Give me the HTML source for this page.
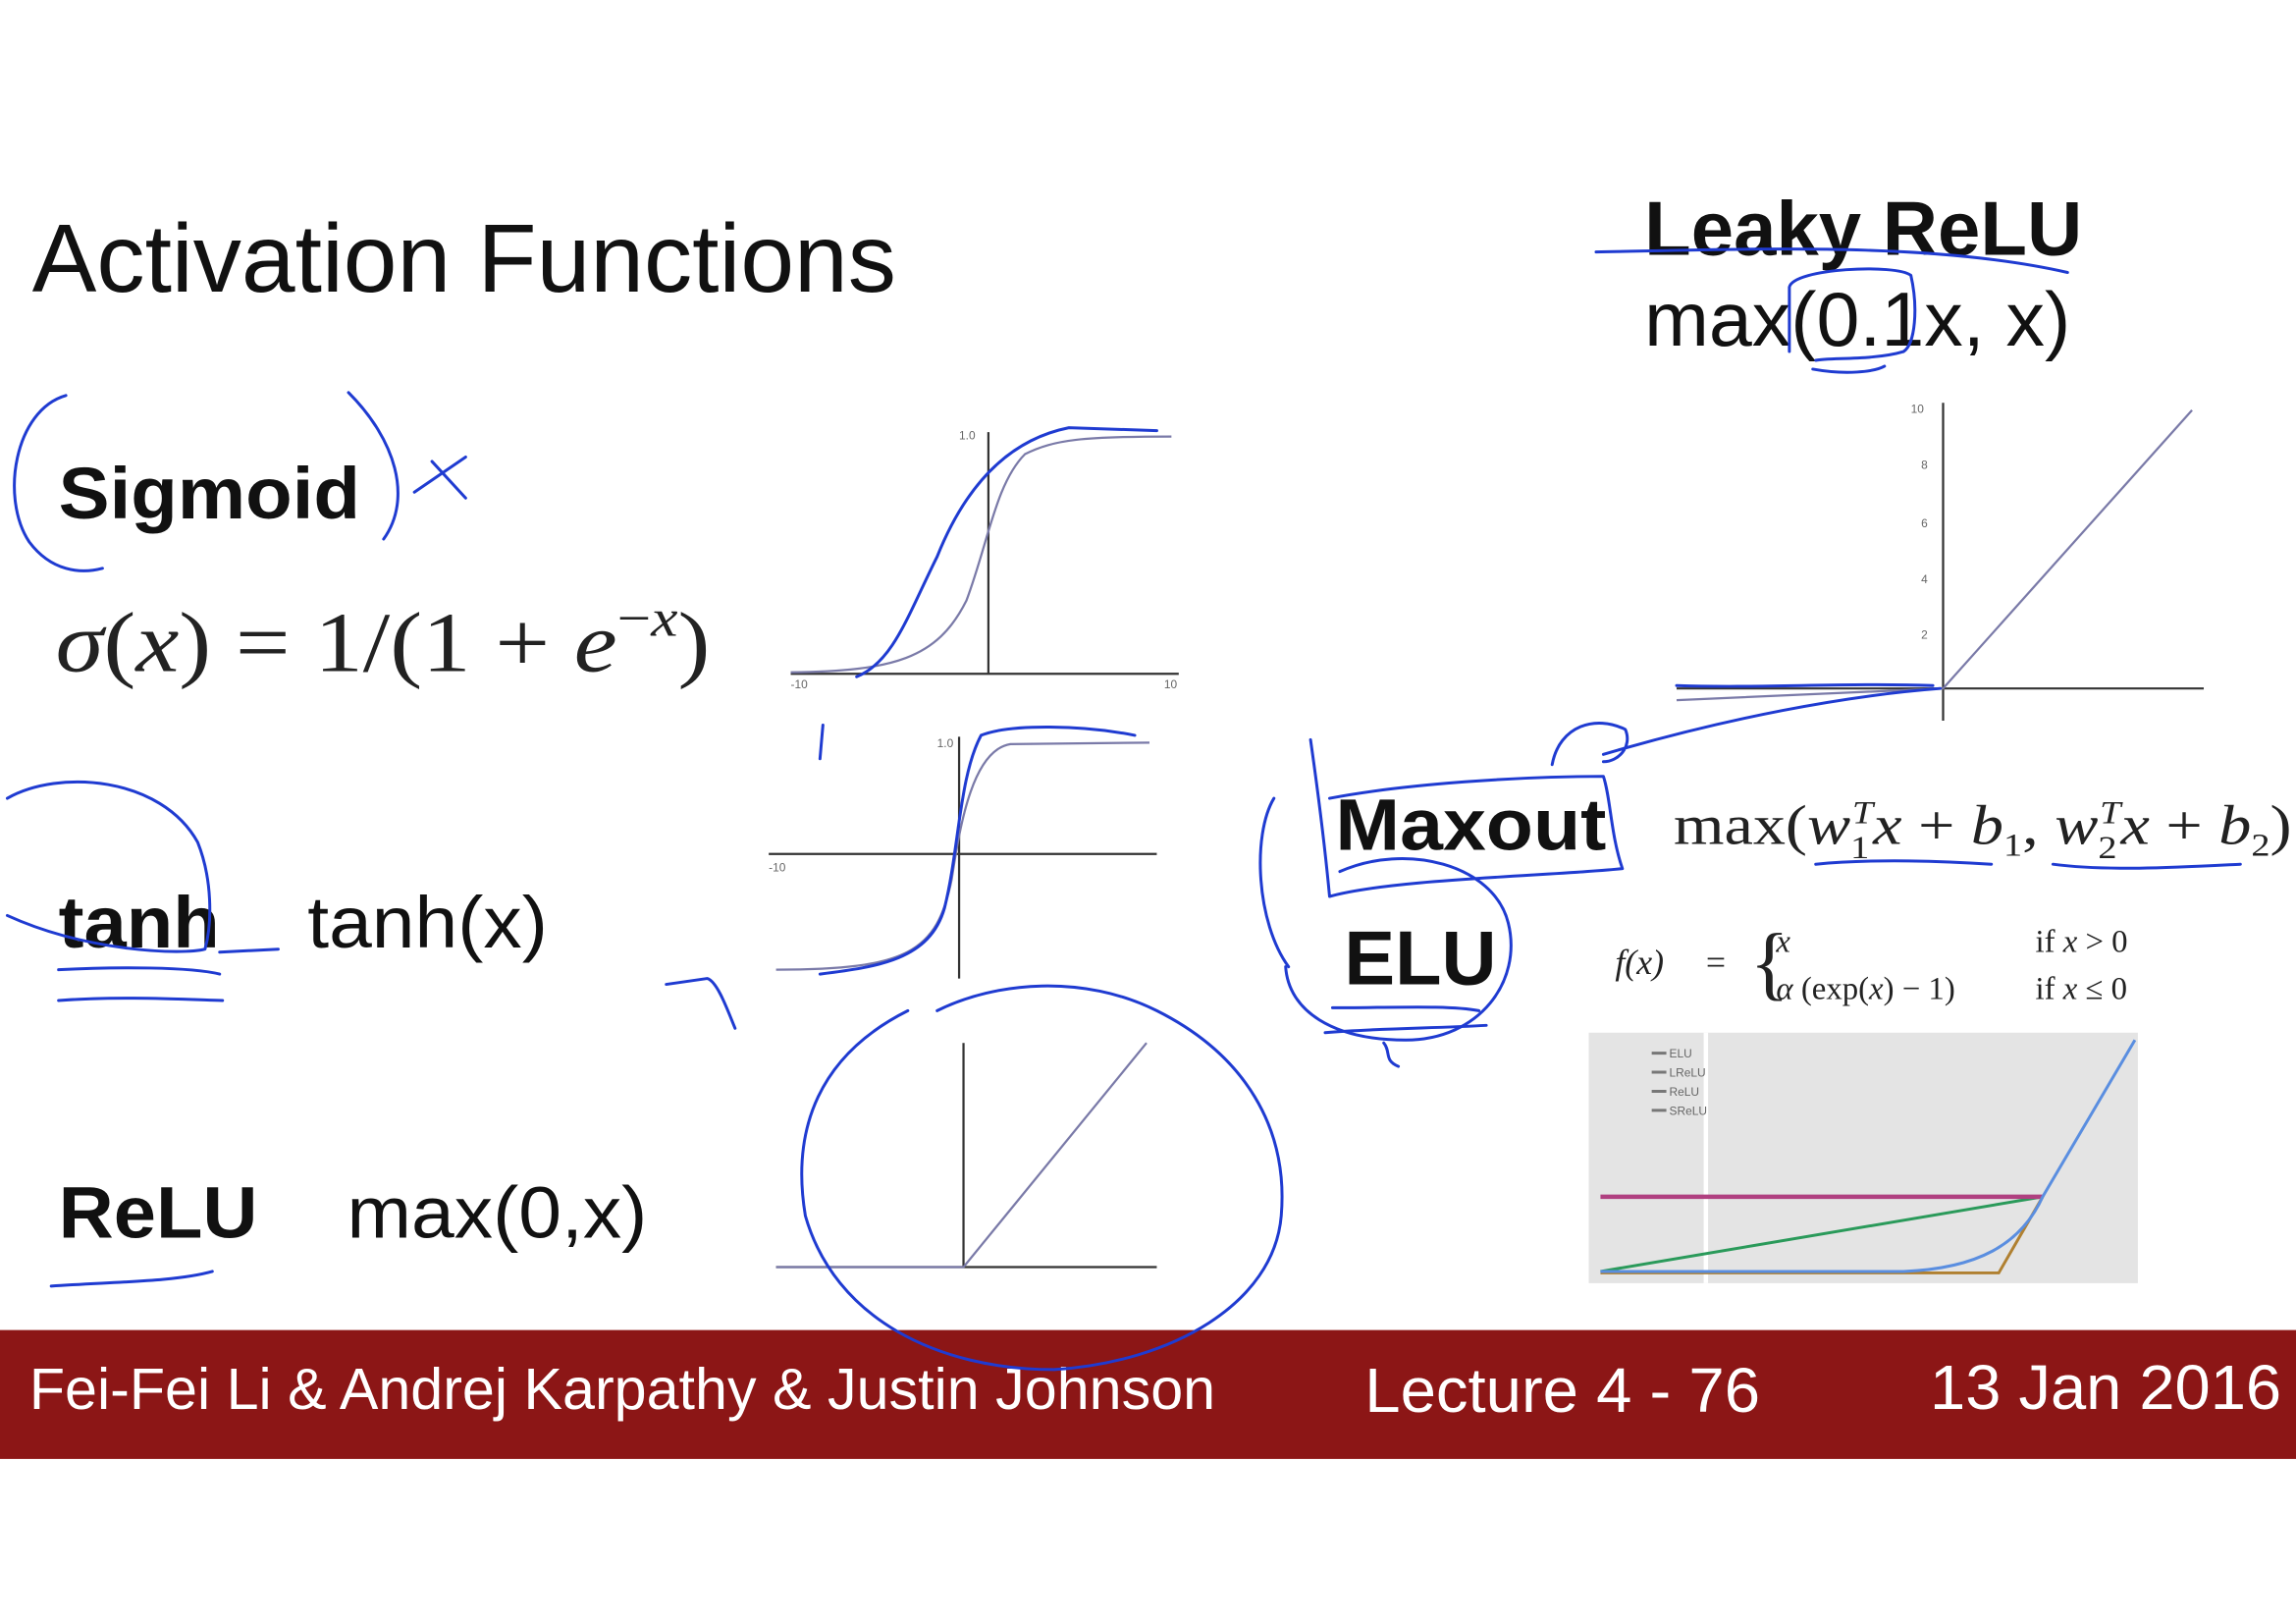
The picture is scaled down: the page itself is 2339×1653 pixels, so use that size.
<!DOCTYPE html>
<html><head><meta charset="utf-8"><style>
html,body{margin:0;padding:0;background:#fff;width:2339px;height:1653px;overflow:hidden}
svg{display:block}
.s{font-family:"Liberation Sans",sans-serif;fill:#111}
.b{font-weight:bold}
.m{font-family:"Liberation Serif",serif;fill:#222}
.ink{fill:none;stroke:#1f3bd1;stroke-width:2;stroke-linecap:round;stroke-linejoin:round}
.ax{stroke:#333;stroke-width:1.5;fill:none}
.tk{font-family:"Liberation Sans",sans-serif;font-size:8px;fill:#666}
</style></head><body>
<svg width="2339" height="1653" viewBox="0 0 1568 1108" preserveAspectRatio="none">
<rect width="1568" height="1108" fill="#fff"/>
<text class="s" x="22" y="199" font-size="66" textLength="590" lengthAdjust="spacingAndGlyphs">Activation Functions</text>
<text class="s b" x="1123" y="174" font-size="52" textLength="299" lengthAdjust="spacingAndGlyphs">Leaky ReLU</text>
<text class="s" x="1123" y="236" font-size="52" textLength="291" lengthAdjust="spacingAndGlyphs">max(0.1x, x)</text>
<text class="s b" x="40" y="354" font-size="50" textLength="206" lengthAdjust="spacingAndGlyphs">Sigmoid</text>
<text class="m" x="38" y="458" font-size="58" textLength="447" lengthAdjust="spacingAndGlyphs"><tspan font-style="italic">σ</tspan>(<tspan font-style="italic">x</tspan>) = 1/(1 + <tspan font-style="italic">e</tspan><tspan font-size="36" dy="-24">−<tspan font-style="italic">x</tspan></tspan><tspan dy="24">)</tspan></text>
<text class="s b" x="40" y="647" font-size="50" textLength="110" lengthAdjust="spacingAndGlyphs">tanh</text>
<text class="s" x="210" y="647" font-size="50" textLength="164" lengthAdjust="spacingAndGlyphs">tanh(x)</text>
<text class="s b" x="40" y="845" font-size="50" textLength="136" lengthAdjust="spacingAndGlyphs">ReLU</text>
<text class="s" x="237" y="845" font-size="50" textLength="205" lengthAdjust="spacingAndGlyphs">max(0,x)</text>
<text class="s b" x="912" y="580" font-size="50" textLength="185" lengthAdjust="spacingAndGlyphs">Maxout</text>
<text class="m" x="1143" y="576" font-size="38" textLength="422" lengthAdjust="spacingAndGlyphs">max(<tspan font-style="italic">w</tspan><tspan font-size="22" dy="10">1</tspan><tspan font-size="22" dy="-24" dx="-10" font-style="italic">T</tspan><tspan dy="14" font-style="italic">x</tspan> + <tspan font-style="italic">b</tspan><tspan font-size="22" dy="8">1</tspan><tspan dy="-8">, </tspan><tspan font-style="italic">w</tspan><tspan font-size="22" dy="10">2</tspan><tspan font-size="22" dy="-24" dx="-10" font-style="italic">T</tspan><tspan dy="14" font-style="italic">x</tspan> + <tspan font-style="italic">b</tspan><tspan font-size="22" dy="8">2</tspan><tspan dy="-8">)</tspan></text>
<text class="s b" x="918" y="672" font-size="52" textLength="104" lengthAdjust="spacingAndGlyphs">ELU</text>
<text class="m" x="1103" y="665" font-size="24" font-style="italic">f(x)</text>
<text class="m" x="1165" y="665" font-size="24">=</text>
<text class="m" x="1195" y="676" font-size="56" fill="#444">{</text>
<text class="m" x="1213" y="650" font-size="22" font-style="italic">x</text>
<text class="m" x="1213" y="682" font-size="22"><tspan font-style="italic">α</tspan> (exp(<tspan font-style="italic">x</tspan>) − 1)</text>
<text class="m" x="1390" y="650" font-size="22">if <tspan font-style="italic">x</tspan> &gt; 0</text>
<text class="m" x="1390" y="682" font-size="22">if <tspan font-style="italic">x</tspan> ≤ 0</text>

<path class="ax" d="M540 460H805M675 295V460"/>
<path d="M540 459 C610 458 640 450 660 410 C675 370 680 330 700 310 C720 300 740 298 800 298" fill="none" stroke="#7a7aa8" stroke-width="1.5"/>
<text class="tk" x="655" y="300">1.0</text><text class="tk" x="540" y="470">-10</text><text class="tk" x="795" y="470">10</text>
<path class="ax" d="M525 583H790M655 503V668"/>
<path d="M530 662 C620 662 640 650 650 600 C656 560 665 512 690 508 L785 507" fill="none" stroke="#7a7aa8" stroke-width="1.5"/>
<text class="tk" x="640" y="510">1.0</text><text class="tk" x="525" y="595">-10</text>
<path class="ax" d="M530 865H790M658 712V865"/>
<path d="M530 865H658L783 712" fill="none" stroke="#7a7aa8" stroke-width="1.5"/>
<path class="ax" d="M1145 470H1505M1327 275V492"/>
<path d="M1145 478L1327 470L1497 280" fill="none" stroke="#7a7aa8" stroke-width="1.5"/>
<text class="tk" x="1305" y="282">10</text><text class="tk" x="1312" y="320">8</text><text class="tk" x="1312" y="360">6</text><text class="tk" x="1312" y="398">4</text><text class="tk" x="1312" y="436">2</text>
<rect x="1085" y="705" width="375" height="171" fill="#e4e4e4"/>
<path d="M1165 705V876" stroke="#fff" stroke-width="3"/>
<path d="M1093 868L1395 817" stroke="#2a9a5a" stroke-width="2"/>
<path d="M1093 817H1395" stroke="#b04080" stroke-width="3"/>
<path d="M1093 869H1365L1395 817" stroke="#b08030" stroke-width="2" fill="none"/>
<path d="M1093 868H1300C1350 866 1380 850 1395 817L1458 710" stroke="#5a8ee0" stroke-width="2" fill="none"/>
<text class="tk" x="1140" y="722">ELU</text><text class="tk" x="1140" y="735">LReLU</text><text class="tk" x="1140" y="748">ReLU</text><text class="tk" x="1140" y="761">SReLU</text>
<path d="M1128 719h10M1128 732h10M1128 745h10M1128 758h10" stroke="#777" stroke-width="2"/>

<rect x="0" y="908" width="1568" height="88" fill="#8c1616"/>
<text class="s" x="20" y="962" font-size="40" style="fill:#fff" textLength="810" lengthAdjust="spacingAndGlyphs">Fei-Fei Li &amp; Andrej Karpathy &amp; Justin Johnson</text>
<text class="s" x="932" y="964" font-size="43" style="fill:#fff" textLength="270" lengthAdjust="spacingAndGlyphs">Lecture 4 - 76</text>
<text class="s" x="1318" y="962" font-size="43" style="fill:#fff" textLength="240" lengthAdjust="spacingAndGlyphs">13 Jan 2016</text>

<g class="ink">
<path d="M45 270C10 280 0 340 20 370C35 390 55 392 70 388"/>
<path d="M238 268C270 300 282 340 262 368"/>
<path d="M283 336L318 312M295 315L318 340"/>
<path d="M1090 172C1200 170 1320 165 1412 186"/>
<path d="M1222 240V196C1225 183 1295 180 1305 188C1310 210 1308 235 1300 240C1280 246 1250 244 1240 246M1238 252C1260 256 1280 254 1287 250"/>
<path d="M585 462C610 452 620 420 640 380C660 330 690 300 730 292L790 294"/>
<path d="M562 495L560 518"/>
<path d="M560 665C600 660 635 655 645 620C655 580 655 530 670 502C690 494 740 495 775 502"/>
<path d="M455 672L483 668C490 670 497 690 502 702"/>
<path d="M5 545C40 525 110 530 135 575C145 600 145 630 140 648C125 652 60 650 5 625"/>
<path d="M40 662C80 660 130 660 150 665M40 683C80 680 120 682 152 683M150 650L190 648"/>
<path d="M35 878C80 875 120 875 145 868"/>
<path d="M640 690C680 670 740 665 790 690C850 720 880 770 875 830C870 890 800 930 720 935C640 935 570 900 550 830C540 770 560 720 620 690"/>
<path d="M895 505C900 540 905 580 908 612C950 600 1060 598 1108 593C1100 570 1100 545 1095 530C1040 530 960 535 908 545"/>
<path d="M870 545C855 570 858 630 880 660M915 595C960 575 1020 590 1030 630C1040 670 1010 710 960 710C910 710 880 690 878 660"/>
<path d="M910 688C950 688 990 686 1010 690M905 705C940 702 980 702 1015 700M945 712C950 718 945 724 955 728"/>
<path d="M1060 522C1065 495 1090 488 1110 498C1115 510 1105 520 1095 520M1095 515C1180 490 1260 475 1325 470M1145 468C1200 470 1260 466 1320 468"/>
<path d="M1240 590C1280 586 1330 588 1360 590M1402 590C1440 595 1490 592 1530 590"/>
</g>
</svg>
</body></html>
